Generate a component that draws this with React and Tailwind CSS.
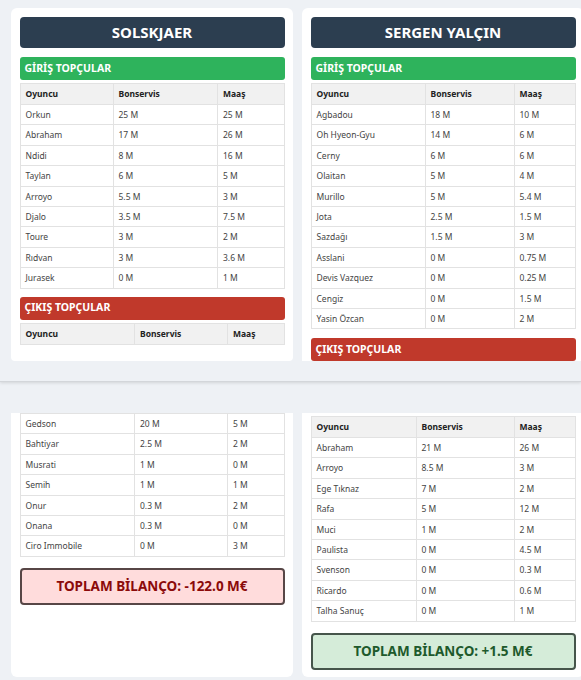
import React from "react";

const solGiris = [
    ["Orkun", "25 M", "25 M"],
    ["Abraham", "17 M", "26 M"],
    ["Ndidi", "8 M", "16 M"],
    ["Taylan", "6 M", "5 M"],
    ["Arroyo", "5.5 M", "3 M"],
    ["Djalo", "3.5 M", "7.5 M"],
    ["Toure", "3 M", "2 M"],
    ["Rıdvan", "3 M", "3.6 M"],
    ["Jurasek", "0 M", "1 M"],
];

const solCikis = [
    ["Gedson", "20 M", "5 M"],
    ["Bahtiyar", "2.5 M", "2 M"],
    ["Musrati", "1 M", "0 M"],
    ["Semih", "1 M", "1 M"],
    ["Onur", "0.3 M", "2 M"],
    ["Onana", "0.3 M", "0 M"],
    ["Ciro Immobile", "0 M", "3 M"],
];

const serGiris = [
    ["Agbadou", "18 M", "10 M"],
    ["Oh Hyeon-Gyu", "14 M", "6 M"],
    ["Cerny", "6 M", "6 M"],
    ["Olaitan", "5 M", "4 M"],
    ["Murillo", "5 M", "5.4 M"],
    ["Jota", "2.5 M", "1.5 M"],
    ["Sazdağı", "1.5 M", "3 M"],
    ["Asslani", "0 M", "0.75 M"],
    ["Devis Vazquez", "0 M", "0.25 M"],
    ["Cengiz", "0 M", "1.5 M"],
    ["Yasin Özcan", "0 M", "2 M"],
];

const serCikis = [
    ["Abraham", "21 M", "26 M"],
    ["Arroyo", "8.5 M", "3 M"],
    ["Ege Tıknaz", "7 M", "2 M"],
    ["Rafa", "5 M", "12 M"],
    ["Muci", "1 M", "2 M"],
    ["Paulista", "0 M", "4.5 M"],
    ["Svenson", "0 M", "0.3 M"],
    ["Ricardo", "0 M", "0.6 M"],
    ["Talha Sanuç", "0 M", "1 M"],
];

function PlayerTable({ rows, cols, header = true }) {
    return (
        <table className="w-full table-fixed border-collapse text-[8.5px] text-[#444]">
            <colgroup>
                <col style={{ width: cols[0] }} />
                <col style={{ width: cols[1] }} />
                <col />
            </colgroup>
            {header && (
                <thead>
                    <tr className="bg-[#f1f1f1] text-[#222]">
                        <th className="border border-[#e2e2e2] px-[5px] py-[3px] leading-[14px] text-left font-bold">Oyuncu</th>
                        <th className="border border-[#e2e2e2] px-[5px] py-[3px] leading-[14px] text-left font-bold">Bonservis</th>
                        <th className="border border-[#e2e2e2] px-[5px] py-[3px] leading-[14px] text-left font-bold">Maaş</th>
                    </tr>
                </thead>
            )}
            <tbody>
                {rows.map((r) => (
                    <tr key={r[0]}>
                        {r.map((c, i) => (
                            <td key={i} className="border border-[#e2e2e2] px-[5px] py-[3px] leading-[13.4px] whitespace-nowrap">
                                {c}
                            </td>
                        ))}
                    </tr>
                ))}
            </tbody>
        </table>
    );
}

function Bar({ children, color }) {
    return (
        <div className={`h-[23px] rounded-[3px] px-[5px] flex items-center text-white font-bold text-[10.5px] ${color}`}>
            {children}
        </div>
    );
}

export default function App() {
    return (
        <div className="w-[581px] h-[680px] overflow-hidden bg-[#eef1f5] font-['Noto_Sans',sans-serif]">
            {/* Üst görünüm */}
            <div className="h-[382px] overflow-hidden flex gap-[9px] pl-[11px] pt-[8px] border-b border-[#d3d6da] shadow-[0_1px_3px_rgba(0,0,0,0.12)]">
                <div className="w-[282px] h-[353px] shrink-0 overflow-hidden bg-white rounded-t-md rounded-b-sm px-[8.5px] pt-[9px]">
                    <div className="h-[31px] bg-[#2c3e50] rounded-[4px] flex items-center justify-center text-white font-bold text-[15px]">
                        SOLSKJAER
                    </div>
                    <div className="mt-[9px]">
                        <Bar color="bg-[#2eb35c]">GİRİŞ TOPÇULAR</Bar>
                    </div>
                    <div className="mt-[3px]">
                        <PlayerTable rows={solGiris} cols={["93px", "104.5px"]} />
                    </div>
                    <div className="mt-[8px]">
                        <Bar color="bg-[#c0392b]">ÇIKIŞ TOPÇULAR</Bar>
                    </div>
                    <div className="mt-[3px]">
                        <PlayerTable rows={[]} cols={["114.5px", "93px"]} />
                    </div>
                </div>
                <div className="w-[282px] h-[353px] shrink-0 overflow-hidden bg-white rounded-t-md px-[8.5px] pt-[9px]">
                    <div className="h-[31px] bg-[#2c3e50] rounded-[4px] flex items-center justify-center text-white font-bold text-[15px]">
                        SERGEN YALÇIN
                    </div>
                    <div className="mt-[9px]">
                        <Bar color="bg-[#2eb35c]">GİRİŞ TOPÇULAR</Bar>
                    </div>
                    <div className="mt-[3px]">
                        <PlayerTable rows={serGiris} cols={["114px", "89px"]} />
                    </div>
                    <div className="mt-[8.5px]">
                        <Bar color="bg-[#c0392b]">ÇIKIŞ TOPÇULAR</Bar>
                    </div>
                </div>
            </div>

            {/* Alt görünüm */}
            <div className="flex gap-[9px] pl-[11px] pt-[31px]">
                <div className="w-[282px] h-[264px] shrink-0 bg-white rounded-b-md px-[8.5px]">
                    <PlayerTable rows={solCikis} cols={["114.5px", "93px"]} header={false} />
                    <div className="mt-[11px] h-[37px] rounded-[4px] border-2 border-[#574646] bg-[#ffdcdc] flex items-center justify-center text-[#8b0a0a] font-bold text-[13.5px]">
                        TOPLAM BİLANÇO: -122.0 M€
                    </div>
                </div>
                <div className="w-[282px] h-[264px] shrink-0 bg-white rounded-b-md px-[8.5px] pt-[3px]">
                    <PlayerTable rows={serCikis} cols={["105px", "98px"]} />
                    <div className="mt-[11px] h-[37px] rounded-[4px] border-2 border-[#46554b] bg-[#d5ecd9] flex items-center justify-center text-[#1e5a2c] font-bold text-[13.5px]">
                        TOPLAM BİLANÇO: +1.5 M€
                    </div>
                </div>
            </div>
        </div>
    );
}
